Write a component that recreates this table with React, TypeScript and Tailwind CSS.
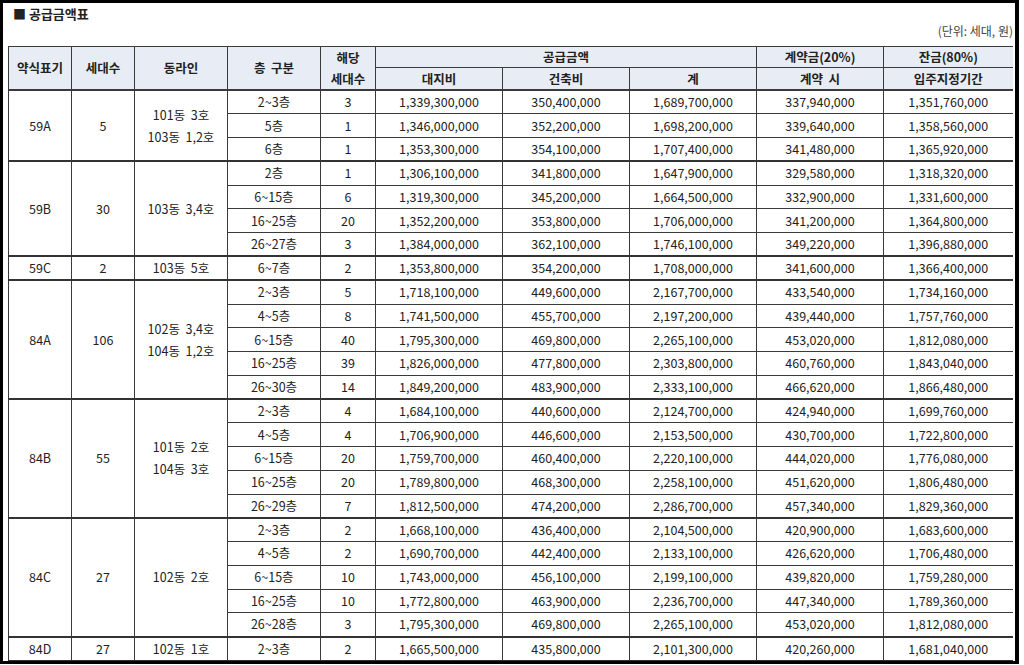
import React from 'react';

type Row = [string, string, string, string, string, string, string];
type Group = { type: string; units: string; lines: string[]; rows: Row[] };

const GROUPS: Group[] = [
  {
    type: '59A',
    units: '5',
    lines: ['101동  3호', '103동  1,2호'],
    rows: [
      ['2~3층', '3', '1,339,300,000', '350,400,000', '1,689,700,000', '337,940,000', '1,351,760,000'],
      ['5층', '1', '1,346,000,000', '352,200,000', '1,698,200,000', '339,640,000', '1,358,560,000'],
      ['6층', '1', '1,353,300,000', '354,100,000', '1,707,400,000', '341,480,000', '1,365,920,000'],
    ],
  },
  {
    type: '59B',
    units: '30',
    lines: ['103동  3,4호'],
    rows: [
      ['2층', '1', '1,306,100,000', '341,800,000', '1,647,900,000', '329,580,000', '1,318,320,000'],
      ['6~15층', '6', '1,319,300,000', '345,200,000', '1,664,500,000', '332,900,000', '1,331,600,000'],
      ['16~25층', '20', '1,352,200,000', '353,800,000', '1,706,000,000', '341,200,000', '1,364,800,000'],
      ['26~27층', '3', '1,384,000,000', '362,100,000', '1,746,100,000', '349,220,000', '1,396,880,000'],
    ],
  },
  {
    type: '59C',
    units: '2',
    lines: ['103동  5호'],
    rows: [['6~7층', '2', '1,353,800,000', '354,200,000', '1,708,000,000', '341,600,000', '1,366,400,000']],
  },
  {
    type: '84A',
    units: '106',
    lines: ['102동  3,4호', '104동  1,2호'],
    rows: [
      ['2~3층', '5', '1,718,100,000', '449,600,000', '2,167,700,000', '433,540,000', '1,734,160,000'],
      ['4~5층', '8', '1,741,500,000', '455,700,000', '2,197,200,000', '439,440,000', '1,757,760,000'],
      ['6~15층', '40', '1,795,300,000', '469,800,000', '2,265,100,000', '453,020,000', '1,812,080,000'],
      ['16~25층', '39', '1,826,000,000', '477,800,000', '2,303,800,000', '460,760,000', '1,843,040,000'],
      ['26~30층', '14', '1,849,200,000', '483,900,000', '2,333,100,000', '466,620,000', '1,866,480,000'],
    ],
  },
  {
    type: '84B',
    units: '55',
    lines: ['101동  2호', '104동  3호'],
    rows: [
      ['2~3층', '4', '1,684,100,000', '440,600,000', '2,124,700,000', '424,940,000', '1,699,760,000'],
      ['4~5층', '4', '1,706,900,000', '446,600,000', '2,153,500,000', '430,700,000', '1,722,800,000'],
      ['6~15층', '20', '1,759,700,000', '460,400,000', '2,220,100,000', '444,020,000', '1,776,080,000'],
      ['16~25층', '20', '1,789,800,000', '468,300,000', '2,258,100,000', '451,620,000', '1,806,480,000'],
      ['26~29층', '7', '1,812,500,000', '474,200,000', '2,286,700,000', '457,340,000', '1,829,360,000'],
    ],
  },
  {
    type: '84C',
    units: '27',
    lines: ['102동  2호'],
    rows: [
      ['2~3층', '2', '1,668,100,000', '436,400,000', '2,104,500,000', '420,900,000', '1,683,600,000'],
      ['4~5층', '2', '1,690,700,000', '442,400,000', '2,133,100,000', '426,620,000', '1,706,480,000'],
      ['6~15층', '10', '1,743,000,000', '456,100,000', '2,199,100,000', '439,820,000', '1,759,280,000'],
      ['16~25층', '10', '1,772,800,000', '463,900,000', '2,236,700,000', '447,340,000', '1,789,360,000'],
      ['26~28층', '3', '1,795,300,000', '469,800,000', '2,265,100,000', '453,020,000', '1,812,080,000'],
    ],
  },
  {
    type: '84D',
    units: '27',
    lines: ['102동  1호'],
    rows: [['2~3층', '2', '1,665,500,000', '435,800,000', '2,101,300,000', '420,260,000', '1,681,040,000']],
  },
];

const WIDTHS = [63, 63, 93, 93, 55, 127, 127, 127, 127, 129];

const th = 'border border-[#3a3a3a] bg-[#e8edf5] font-bold text-[12.5px] leading-[16px] text-[#222] p-0 text-center whitespace-pre';
const td = 'border border-[#3a3a3a] p-0 text-center whitespace-pre leading-[16px]';

const App: React.FC = () => {
  return (
    <div className="w-[1019px] h-[664px] overflow-hidden bg-white border-t-[3px] border-l-[3px] border-r-[4px] border-b-[3px] border-black font-['Noto_Sans_CJK_KR',sans-serif] text-[#222]">
      <div className="pl-[5px] pt-[2px]">
        <div className="h-[18px] leading-[18px] pl-[5px] text-[13px] font-bold">■ 공급금액표</div>
        <div className="h-[16px] leading-[16px] pr-[2px] text-right text-[12px] text-[#444]">(단위: 세대, 원)</div>
        <table className="mt-[7px] w-[1004px] table-fixed border-collapse">
          <colgroup>
            {WIDTHS.map((w, i) => (
              <col key={i} style={{ width: w }} />
            ))}
          </colgroup>
          <thead>
            <tr className="h-[20px]">
              <th rowSpan={2} className={`${th} border-b-2`}>약식표기</th>
              <th rowSpan={2} className={`${th} border-b-2`}>세대수</th>
              <th rowSpan={2} className={`${th} border-b-2`}>동라인</th>
              <th rowSpan={2} className={`${th} border-b-2`}>층  구분</th>
              <th rowSpan={2} className={`${th} border-b-2 leading-[21px]`}>
                {'해당\n세대수'}
              </th>
              <th colSpan={3} className={th}>공급금액</th>
              <th className={th}>계약금(20%)</th>
              <th className={`${th} border-r-0`}>잔금(80%)</th>
            </tr>
            <tr className="h-[21px]">
              <th className={`${th} border-b-2`}>대지비</th>
              <th className={`${th} border-b-2`}>건축비</th>
              <th className={`${th} border-b-2`}>계</th>
              <th className={`${th} border-b-2`}>계약  시</th>
              <th className={`${th} border-b-2 border-r-0`}>입주지정기간</th>
            </tr>
          </thead>
          <tbody className="text-[12.5px]">
            {GROUPS.map(g =>
              g.rows.map((r, i) => {
                const last = i === g.rows.length - 1;
                const b = last ? 'border-b-2 border-b-[#333]' : '';
                return (
                  <tr key={g.type + i} className="h-[23.75px]">
                    {i === 0 && (
                      <>
                        <td rowSpan={g.rows.length} className={`${td} border-b-2 border-b-[#333]`}>{g.type}</td>
                        <td rowSpan={g.rows.length} className={`${td} border-b-2 border-b-[#333]`}>{g.units}</td>
                        <td rowSpan={g.rows.length} className={`${td} border-b-2 border-b-[#333] leading-[22px]`}>
                          {g.lines.join('\n')}
                        </td>
                      </>
                    )}
                    {r.map((c, j) => (
                      <td key={j} className={`${td} ${b} ${j === 6 ? 'border-r-0' : ''}`}>
                        {c}
                      </td>
                    ))}
                  </tr>
                );
              })
            )}
          </tbody>
        </table>
      </div>
    </div>
  );
};

export default App;
